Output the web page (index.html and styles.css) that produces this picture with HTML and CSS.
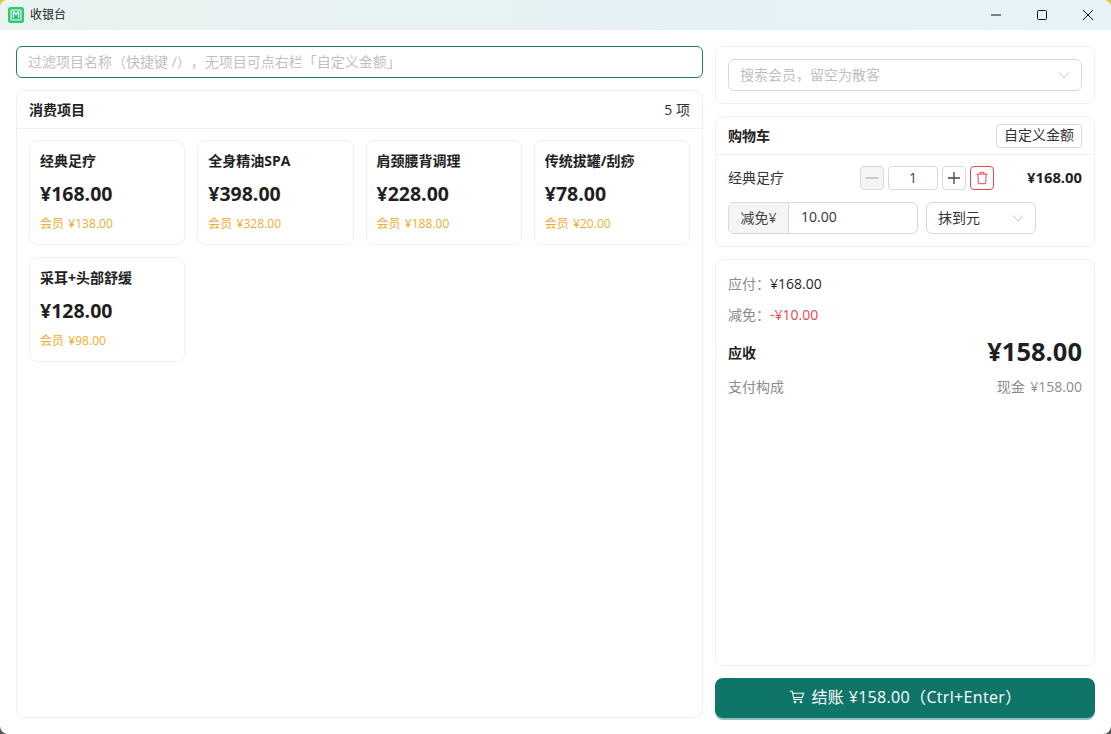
FILE: index.html
```html
<!DOCTYPE html>
<html lang="zh-CN">
<head>
<meta charset="utf-8">
<title>收银台</title>
<link rel="stylesheet" href="styles.css">
</head>
<body>
<div class="app">
  <header class="titlebar">
    <div class="brand">
      <svg class="logo" width="16" height="16" viewBox="0 0 16 16"><rect width="16" height="16" rx="2.5" fill="#2ecc71"/><rect x="2.5" y="2.5" width="11" height="11" rx="1" fill="#d9f7e6"/><rect x="3.7" y="3.7" width="8.6" height="8.6" fill="#3fb58a"/><path d="M5.4 10.8V5.2h1L8 7.6l1.6-2.4h1v5.6" fill="none" stroke="#e9fff4" stroke-width="1.2"/></svg>
      <span class="app-name">收银台</span>
    </div>
    <div class="win-controls">
      <button class="win-btn"><svg width="12" height="12" viewBox="0 0 12 12"><path d="M1 6h10" stroke="#111" stroke-width="1"/></svg></button>
      <button class="win-btn"><svg width="12" height="12" viewBox="0 0 12 12"><rect x="1.5" y="1.5" width="9" height="9" rx="1" fill="none" stroke="#111" stroke-width="1"/></svg></button>
      <button class="win-btn"><svg width="12" height="12" viewBox="0 0 12 12"><path d="M1 1l10 10M11 1L1 11" stroke="#111" stroke-width="1"/></svg></button>
    </div>
  </header>
  <main class="main">
    <section class="left">
      <div class="filter"><span class="placeholder">过滤项目名称（快捷键 /），无项目可点右栏「自定义金额」</span></div>
      <div class="panel items-panel">
        <div class="panel-head items-head"><span class="panel-title">消费项目</span><span class="count">5 项</span></div>
        <div class="grid">
          <article class="card"><div class="card-name">经典足疗</div><div class="card-price">¥168.00</div><div class="card-member">会员 ¥138.00</div></article>
          <article class="card"><div class="card-name">全身精油SPA</div><div class="card-price">¥398.00</div><div class="card-member">会员 ¥328.00</div></article>
          <article class="card"><div class="card-name">肩颈腰背调理</div><div class="card-price">¥228.00</div><div class="card-member">会员 ¥188.00</div></article>
          <article class="card"><div class="card-name">传统拔罐/刮痧</div><div class="card-price">¥78.00</div><div class="card-member">会员 ¥20.00</div></article>
          <article class="card"><div class="card-name">采耳+头部舒缓</div><div class="card-price">¥128.00</div><div class="card-member">会员 ¥98.00</div></article>
        </div>
      </div>
    </section>
    <aside class="right">
      <div class="panel member-panel">
        <div class="select member-select"><span class="placeholder">搜索会员，留空为散客</span><svg class="chev" width="12" height="12" viewBox="0 0 12 12"><path d="M1 3.5l5 5.5 5-5.5" fill="none" stroke="#c4c4c4" stroke-width="1"/></svg></div>
      </div>
      <div class="panel cart-panel">
        <div class="panel-head cart-head"><span class="panel-title">购物车</span><button class="btn-custom">自定义金额</button></div>
        <div class="cart-body">
          <div class="cart-row">
            <span class="cart-name">经典足疗</span>
            <div class="qty">
              <button class="sq disabled"><svg width="14" height="14" viewBox="0 0 14 14"><path d="M1 7h12" stroke="#b5b5b5" stroke-width="1.3"/></svg></button>
              <div class="qty-num">1</div>
              <button class="sq"><svg width="14" height="14" viewBox="0 0 14 14"><path d="M1 7h12M7 1v12" stroke="#444" stroke-width="1.3"/></svg></button>
              <button class="sq danger"><svg width="14" height="14" viewBox="0 0 14 14"><path d="M1.5 3.2h11M5 3V1.3h4V3M2.8 3.2l.6 9.5h7.2l.6-9.5" fill="none" stroke="#e5484d" stroke-width="1"/></svg></button>
            </div>
            <span class="cart-price">¥168.00</span>
          </div>
          <div class="cart-row2">
            <div class="discount"><span class="discount-label">减免¥</span><span class="discount-val">10.00</span></div>
            <div class="select round-select"><span>抹到元</span><svg class="chev" width="12" height="12" viewBox="0 0 12 12"><path d="M1 3.5l5 5.5 5-5.5" fill="none" stroke="#c4c4c4" stroke-width="1"/></svg></div>
          </div>
        </div>
      </div>
      <div class="panel summary">
        <div class="sum-line"><span class="muted">应付：</span><span>¥168.00</span></div>
        <div class="sum-line"><span class="muted">减免：</span><span class="red">-¥10.00</span></div>
        <div class="sum-total"><span class="total-label">应收</span><span class="total-val">¥158.00</span></div>
        <div class="sum-pay"><span>支付构成</span><span>现金 ¥158.00</span></div>
      </div>
      <button class="checkout">
        <svg width="16" height="16" viewBox="0 0 16 16"><path d="M.8 2.2h2.4l1.8 8.3h8M3.6 4.3h11l-1.2 4.2H4.6" fill="none" stroke="#fff" stroke-width="1.1"/><circle cx="6" cy="13" r="1.3" fill="#fff"/><circle cx="12" cy="13" r="1.3" fill="#fff"/></svg>
        <span class="checkout-label">结账 ¥158.00（Ctrl+Enter）</span>
      </button>
    </aside>
  </main>
</div>
</body>
</html>
```
FILE: styles.css
```css
* { box-sizing: border-box; }
html, body { margin: 0; height: 100%; }
html { background: linear-gradient(180deg, #e0c840 0, #e0c840 20px, #555 700px, #555 100%); }
body { font-family: "Open Sans", "Noto Sans CJK SC", sans-serif; color: #1f1f1f; font-size: 14px; overflow: hidden; text-spacing-trim: space-all; }
button { font: inherit; color: inherit; padding: 0; cursor: pointer; }
.app { width: 1111px; height: 734px; background: #fff; border-radius: 8px; overflow: hidden; display: flex; flex-direction: column; }
.titlebar { height: 30px; flex: none; display: flex; align-items: center; justify-content: space-between; background: linear-gradient(90deg, #e9f3f0 0%, #e6f1f6 60%, #e7f3f7 100%); }
.brand { display: flex; align-items: center; gap: 6px; padding-left: 8px; }
.logo { display: block; }
.app-name { font-size: 12px; color: #222; padding-bottom: 2px; }
.win-controls { display: flex; }
.win-btn { width: 46px; height: 30px; background: none; border: 0; display: flex; align-items: center; justify-content: center; }
.main { flex: 1; min-height: 0; display: flex; gap: 12px; padding: 16px; }
.left { flex: 1; min-width: 0; display: flex; flex-direction: column; gap: 12px; }
.right { width: 380px; flex: none; display: flex; flex-direction: column; gap: 12px; }
.filter { height: 32px; border: 1px solid #1f7a6d; border-radius: 6px; display: flex; align-items: center; padding: 0 11px 3px; flex: none; }
.placeholder { color: #bfbfbf; font-size: 14px; }
.panel { background: #fff; border: 1px solid #f0f0f0; border-radius: 8px; }
.items-panel { flex: 1; min-height: 0; }
.panel-head { display: flex; align-items: center; justify-content: space-between; border-bottom: 1px solid #f0f0f0; padding: 0 12px; height: 38px; }
.panel-title { font-size: 14px; font-weight: 700; color: #222; padding-bottom: 2px; }
.count { font-size: 14px; color: #333; padding-bottom: 2px; }
.grid { display: grid; grid-template-columns: repeat(4, 1fr); gap: 12px; padding: 11px 12px; }
.card { height: 105px; border: 1px solid #f0f0f0; border-radius: 8px; padding: 11px 10px; }
.card-name { font-size: 14px; font-weight: 700; line-height: 18px; color: #222; }
.card-price { font-size: 19.5px; font-weight: 700; line-height: 28px; margin-top: 10px; color: #1f1f1f; }
.card-member { font-size: 12px; line-height: 18px; margin-top: 7px; color: #f0ad30; word-spacing: 1px; letter-spacing: .05px; }
.member-panel { height: 58px; flex: none; padding: 12px; }
.select { border: 1px solid #d9d9d9; border-radius: 6px; display: flex; align-items: center; justify-content: space-between; padding: 0 11px; background: #fff; }
.select > span { padding-bottom: 2px; }
.member-select { height: 32px; }
.chev { display: block; }
.cart-panel { height: 131px; flex: none; }
.btn-custom { width: 86px; height: 24px; font-size: 14px; line-height: 20px; border: 1px solid #d9d9d9; border-radius: 4px; background: #fff; color: #333; padding-bottom: 2px; }
.cart-body { padding: 11px 12px; }
.cart-row { display: flex; align-items: center; height: 24px; }
.cart-name { font-size: 14px; color: #333; width: 132px; flex: none; padding-bottom: 2px; }
.qty { display: flex; align-items: center; gap: 4px; }
.sq { width: 24px; height: 24px; border: 1px solid #d9d9d9; border-radius: 4px; background: #fff; display: flex; align-items: center; justify-content: center; }
.sq.disabled { background: #f5f5f5; }
.sq.danger { border-color: #e5484d; }
.qty-num { width: 50px; height: 24px; border: 1px solid #d9d9d9; border-radius: 4px; display: flex; align-items: center; justify-content: center; font-size: 14px; color: #444; padding-bottom: 1px; }
.cart-price { margin-left: auto; font-size: 14.8px; font-weight: 700; color: #1f1f1f; padding-bottom: 2px; }
.cart-row2 { display: flex; gap: 8px; margin-top: 12px; }
.discount { width: 190px; height: 32px; border: 1px solid #d9d9d9; border-radius: 6px; display: flex; align-items: center; overflow: hidden; }
.discount-label { width: 60px; height: 100%; background: #f5f5f5; border-right: 1px solid #d9d9d9; display: flex; align-items: center; justify-content: center; font-size: 14px; color: #444; padding-bottom: 2px; }
.discount-val { padding: 0 0 3px 12px; font-size: 14px; color: #333; }
.round-select { width: 110px; height: 32px; font-size: 14px; color: #333; }
.summary { flex: 1; min-height: 0; padding: 13px 12px; }
.sum-line { height: 20px; margin-bottom: 11px; font-size: 14px; display: flex; align-items: center; }
.muted { color: #8c8c8c; font-size: 14px; }
.red { color: #e5484d; }
.sum-total { display: flex; align-items: center; justify-content: space-between; height: 32px; margin-top: 11px; }
.total-label { font-size: 14px; font-weight: 700; padding-top: 2px; }
.total-val { font-size: 25.5px; font-weight: 700; color: #1f1f1f; }
.sum-pay { display: flex; justify-content: space-between; align-items: center; margin-top: 9px; height: 20px; font-size: 14px; color: #8c8c8c; word-spacing: 2px; }
.checkout { height: 40px; flex: none; border: 0; border-radius: 8px; background: #107569; color: #fff; font-size: 16px; display: flex; align-items: center; justify-content: center; gap: 7px; padding-bottom: 4px; box-shadow: 0 2px 0 rgba(16, 117, 105, .45); }
.checkout-label { letter-spacing: .33px; }
.checkout svg { margin-top: 2px; }
```
